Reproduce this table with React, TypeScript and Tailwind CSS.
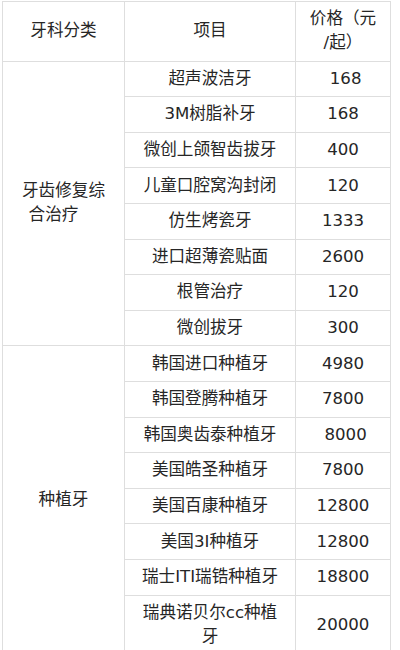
const repairRows: [string, string][] = [
  ["超声波洁牙", "\u00a0168"],
  ["3M树脂补牙", "168"],
  ["微创上颌智齿拔牙", "400"],
  ["儿童口腔窝沟封闭", "120"],
  ["仿生烤瓷牙", "1333"],
  ["进口超薄瓷贴面", "2600"],
  ["根管治疗", "120"],
  ["微创拔牙", "300"],
];

const implantRows: [string, string][] = [
  ["韩国进口种植牙", "4980"],
  ["韩国登腾种植牙", "7800"],
  ["韩国奥齿泰种植牙", "\u00a08000"],
  ["美国皓圣种植牙", "7800"],
  ["美国百康种植牙", "12800"],
  ["美国3I种植牙", "12800"],
  ["瑞士ITI瑞锆种植牙", "18800"],
  ["瑞典诺贝尔cc种植牙", "20000"],
];

const cell = "border border-[#dedede] px-3 py-[5.3px] text-center align-middle";

export default function App() {
  return (
    <div className="min-h-[650px] bg-white pl-[2px] pt-[1px]">
      <table
        className="w-[388px] table-fixed border-collapse text-[16.6px] leading-[24px] text-[#262626]"
        style={{ fontFamily: '"DejaVu Sans", "Noto Sans CJK SC", sans-serif' }}
      >
        <colgroup>
          <col className="w-[122px]" />
          <col className="w-[171px]" />
          <col className="w-[95px]" />
        </colgroup>
        <thead>
          <tr>
            <th className={`${cell} font-normal`}>牙科分类</th>
            <th className={`${cell} font-normal`}>项目</th>
            <th className={`${cell} px-1 font-normal`}>
              价格（元
              <br />
              /起）
            </th>
          </tr>
        </thead>
        <tbody>
          {repairRows.map(([name, price], i) => (
            <tr key={name}>
              {i === 0 && (
                <td className={cell} rowSpan={repairRows.length}>
                  牙齿修复综
                  <br />
                  <span className="pr-5">合治疗</span>
                </td>
              )}
              <td className={cell}>{name}</td>
              <td className={cell}>{price}</td>
            </tr>
          ))}
          {implantRows.map(([name, price], i) => (
            <tr key={name}>
              {i === 0 && (
                <td className={cell} rowSpan={implantRows.length}>
                  种植牙
                </td>
              )}
              <td className={cell}>{name}</td>
              <td className={cell}>{price}</td>
            </tr>
          ))}
        </tbody>
      </table>
    </div>
  );
}
